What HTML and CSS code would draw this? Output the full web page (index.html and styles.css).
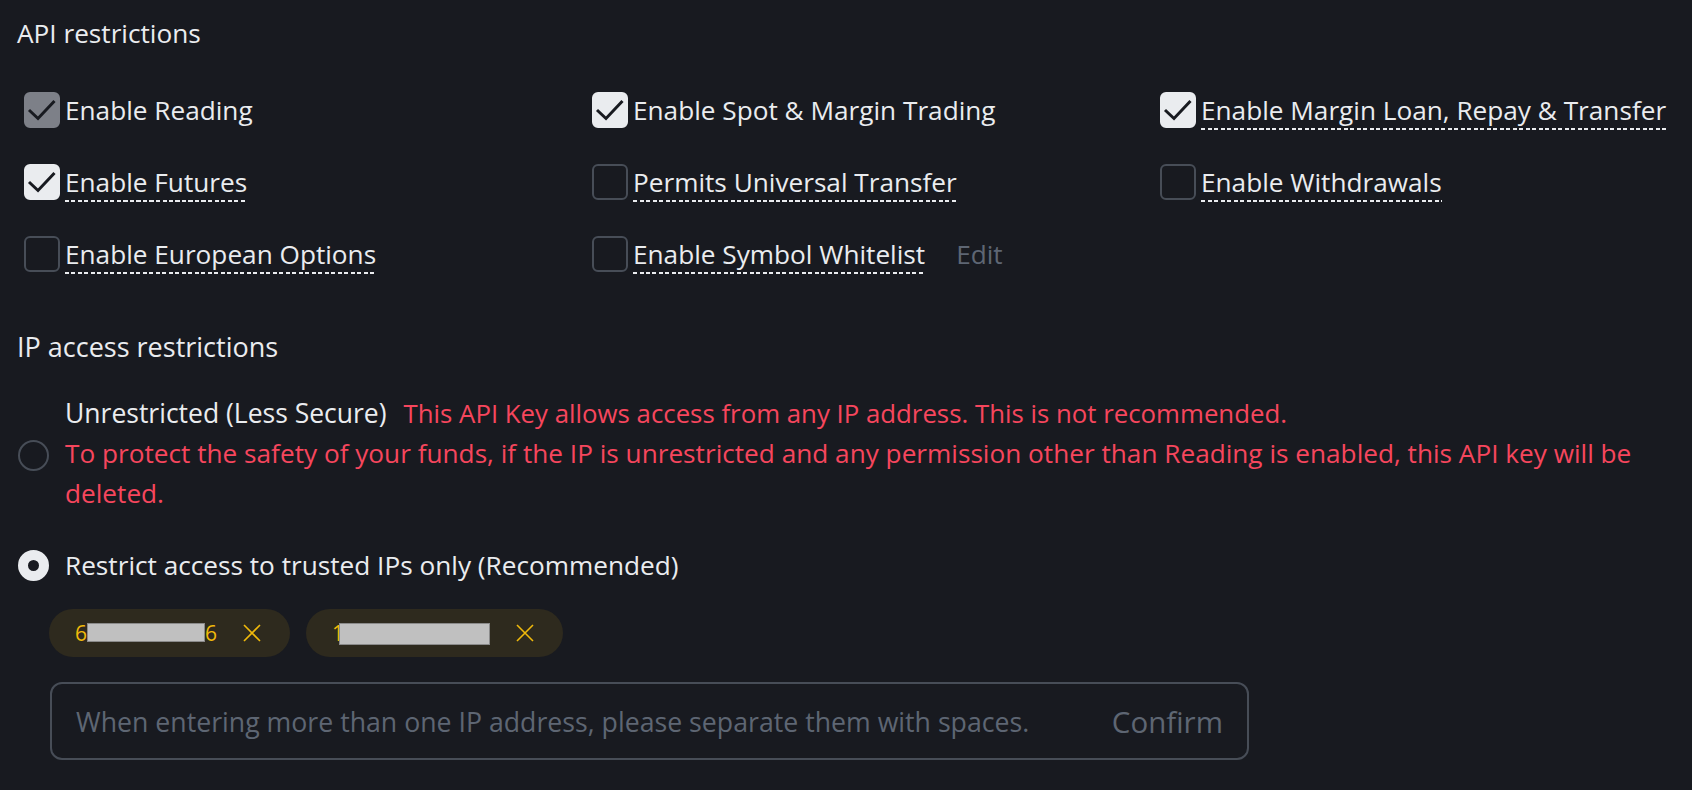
FILE: index.html
```html
<!DOCTYPE html>
<html lang="en">
<head>
  <meta charset="UTF-8">
  <title>API restrictions</title>
  <link rel="stylesheet" href="styles.css">
</head>
<body>

<div class="page">
  <h2 class="section-title">API restrictions</h2>

  <div class="perm-grid">
    <div class="perm">
      <span class="box box-locked"><svg viewBox="0 0 36 36"><path d="M5 18 L14 26.5 L30.5 9"/></svg></span>
      <span class="perm-text">Enable Reading</span>
    </div>
    <div class="perm">
      <span class="box box-on"><svg viewBox="0 0 36 36"><path d="M5 18 L14 26.5 L30.5 9"/></svg></span>
      <span class="perm-text">Enable Spot &amp; Margin Trading</span>
    </div>
    <div class="perm">
      <span class="box box-on"><svg viewBox="0 0 36 36"><path d="M5 18 L14 26.5 L30.5 9"/></svg></span>
      <span class="perm-text dashed">Enable Margin Loan, Repay &amp; Transfer</span>
    </div>

    <div class="perm">
      <span class="box box-on"><svg viewBox="0 0 36 36"><path d="M5 18 L14 26.5 L30.5 9"/></svg></span>
      <span class="perm-text dashed">Enable Futures</span>
    </div>
    <div class="perm">
      <span class="box"></span>
      <span class="perm-text dashed">Permits Universal Transfer</span>
    </div>
    <div class="perm">
      <span class="box"></span>
      <span class="perm-text dashed">Enable Withdrawals</span>
    </div>

    <div class="perm">
      <span class="box"></span>
      <span class="perm-text dashed">Enable European Options</span>
    </div>
    <div class="perm">
      <span class="box"></span>
      <span class="perm-text dashed">Enable Symbol Whitelist</span>
      <span class="edit">Edit</span>
    </div>
  </div>

  <h2 class="section-title ip-title">IP access restrictions</h2>

  <div class="ip-option ip-open">
    <span class="radio"></span>
    <div class="ip-text">
      <div><span class="opt-label">Unrestricted (Less Secure)</span><span class="warn warn-inline">This API Key allows access from any IP address. This is not recommended.</span></div>
      <div class="warn">To protect the safety of your funds, if the IP is unrestricted and any permission other than Reading is enabled, this API key will be deleted.</div>
    </div>
  </div>

  <div class="ip-option">
    <span class="radio radio-on"></span>
    <div class="ip-text">Restrict access to trusted IPs only (Recommended)</div>
  </div>

  <div class="chips">
    <span class="chip">
      <span>6</span><span class="mask mask-a"></span><span>6</span>
      <svg class="chip-x" viewBox="0 0 18 18"><path d="M1 1 L17 17 M17 1 L1 17"/></svg>
    </span>
    <span class="chip">
      <span>1</span><span class="mask mask-b"></span>
      <svg class="chip-x" viewBox="0 0 18 18"><path d="M1 1 L17 17 M17 1 L1 17"/></svg>
    </span>
  </div>

  <div class="ip-input">
    <span class="placeholder">When entering more than one IP address, please separate them with spaces.</span>
    <span class="confirm">Confirm</span>
  </div>
</div>

</body>
</html>
```

FILE: styles.css
```css
body {
  margin: 0;
  background-color: #181a20;
  color: #eaecef;
  font-family: "Open Sans", "Noto Sans", sans-serif;
  font-size: 26.2px;
}

.page {
  padding: 15px 16px 0 17px;
}

.section-title {
  margin: 0;
  font-size: 26.2px;
  font-weight: 400;
  line-height: 36px;
}

.perm-grid {
  display: grid;
  grid-template-columns: repeat(3, 568px);
  row-gap: 34px;
  margin: 41px 0 0 7px;
}

.perm {
  display: flex;
  align-items: flex-start;
  gap: 5px;
}

.box {
  flex: none;
  width: 36px;
  height: 36px;
  box-sizing: border-box;
  border: 2px solid #474d57;
  border-radius: 6px;
}

.box svg {
  display: block;
  width: 36px;
  height: 36px;
  margin: -2px;
  fill: none;
  stroke: #181a20;
  stroke-width: 3;
}

.box-on {
  background-color: #eaecef;
  border-color: #eaecef;
}

.box-locked {
  background-color: #7d8088;
  border-color: #7d8088;
}

.perm-text {
  line-height: 36px;
  padding-bottom: 2px;
}

.dashed {
  background-image: repeating-linear-gradient(90deg, #eaecef 0 4px, transparent 4px 6.5px);
  background-size: 100% 2px;
  background-position: left bottom;
  background-repeat: no-repeat;
}

.edit {
  line-height: 36px;
  margin-left: 26px;
  color: #5e6673;
}

.ip-title {
  margin-top: 55px;
  font-size: 27px;
}

.ip-option {
  display: flex;
  align-items: center;
  gap: 16px;
  margin-top: 32px;
  line-height: 40px;
}

.ip-open {
  margin-top: 28px;
}

.ip-open .radio {
  margin-top: 4px;
}

.radio {
  flex: none;
  width: 31px;
  height: 31px;
  margin-left: 1px;
  box-sizing: border-box;
  border: 2px solid #474d57;
  border-radius: 50%;
}

.radio-on {
  border: 10px solid #eaecef;
  background-color: #181a20;
}

.ip-text {
  max-width: 1590px;
}

.opt-label {
  font-size: 26.5px;
}

.warn {
  color: #f6465d;
}

.warn-inline {
  margin-left: 17px;
  font-size: 25.8px;
}

.chips {
  display: flex;
  gap: 16px;
  margin: 24px 0 0 32px;
}

.chip {
  display: flex;
  align-items: center;
  height: 48px;
  padding: 0 29px 0 26px;
  border-radius: 24px;
  background-color: #2e2a1e;
  color: #f0b90b;
  font-size: 21px;
}

.mask {
  height: 19px;
  background-color: #c0c0c0;
  border: 1px solid #8a8a8a;
  box-sizing: border-box;
}

.mask-a {
  width: 118px;
  margin-top: -2px;
}

.mask-b {
  width: 151px;
  height: 22px;
  margin: 2px 0 0 -5px;
}

.chip-x {
  width: 18px;
  height: 18px;
  margin-left: 26px;
  fill: none;
  stroke: #f0b90b;
  stroke-width: 1.6;
}

.ip-input {
  display: flex;
  justify-content: space-between;
  align-items: center;
  width: 1199px;
  height: 78px;
  box-sizing: border-box;
  margin: 25px 0 0 33px;
  padding: 0 24px;
  border: 2px solid #474d57;
  border-radius: 12px;
  color: #5e6673;
  font-size: 26.7px;
}

.confirm {
  font-size: 29.5px;
}
```
